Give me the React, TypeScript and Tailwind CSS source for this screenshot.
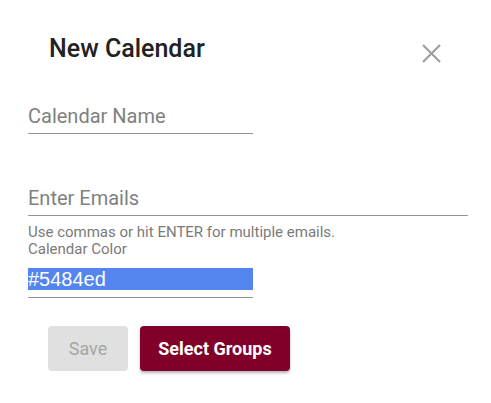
import React from "react";

export default function App() {
  return (
    <div className="w-[491px] h-[403px] bg-white font-['Roboto',sans-serif]">
      <div className="px-[28px] pt-[35px]">
        <div className="flex items-start justify-between">
          <h2 className="ml-[21px] text-[25px] leading-[28px] font-medium text-[#222222]">
            New Calendar
          </h2>
          <button className="mt-[9px] mr-[22px] text-[#9e9e9e]" aria-label="close">
            <svg width="19" height="19" viewBox="0 0 20 20" fill="none" stroke="currentColor" strokeWidth="2.2">
              <path d="M1 1L19 19M19 1L1 19" />
            </svg>
          </button>
        </div>

        <input
          placeholder="Calendar Name"
          className="mt-[43px] block w-[225px] h-[28px] pb-[7px] border-b border-[#949494] text-[20px] text-[#212121] placeholder:text-[#808080] outline-none"
        />

        <input
          placeholder="Enter Emails"
          className="mt-[54px] block w-[440px] h-[28px] pb-[7px] border-b border-[#949494] text-[20px] text-[#212121] placeholder:text-[#808080] outline-none"
        />

        <div className="mt-[8px] text-[15px] leading-[17px] text-[#7a7a7a]">
          <p>Use commas or hit ENTER for multiple emails.</p>
          <p>Calendar Color</p>
        </div>

        <div className="mt-[10px] w-[225px] pb-[7px] border-b border-[#949494]">
          <div className="h-[22px] bg-[#5484ed] text-white text-[20px] leading-[22px] font-['Liberation_Sans',Arial,sans-serif]">
            #5484ed
          </div>
        </div>

        <div className="mt-[28px] ml-[20px] flex gap-[12px]">
          <button className="h-[45px] w-[80px] rounded-[4px] bg-[#e0e0e0] text-[18px] text-[#a6a6a6]">
            Save
          </button>
          <button className="h-[45px] w-[150px] rounded-[4px] bg-[#80002a] text-[18px] font-bold text-white shadow-[0_2px_3px_rgba(0,0,0,0.3)]">
            Select Groups
          </button>
        </div>
      </div>
    </div>
  );
}
